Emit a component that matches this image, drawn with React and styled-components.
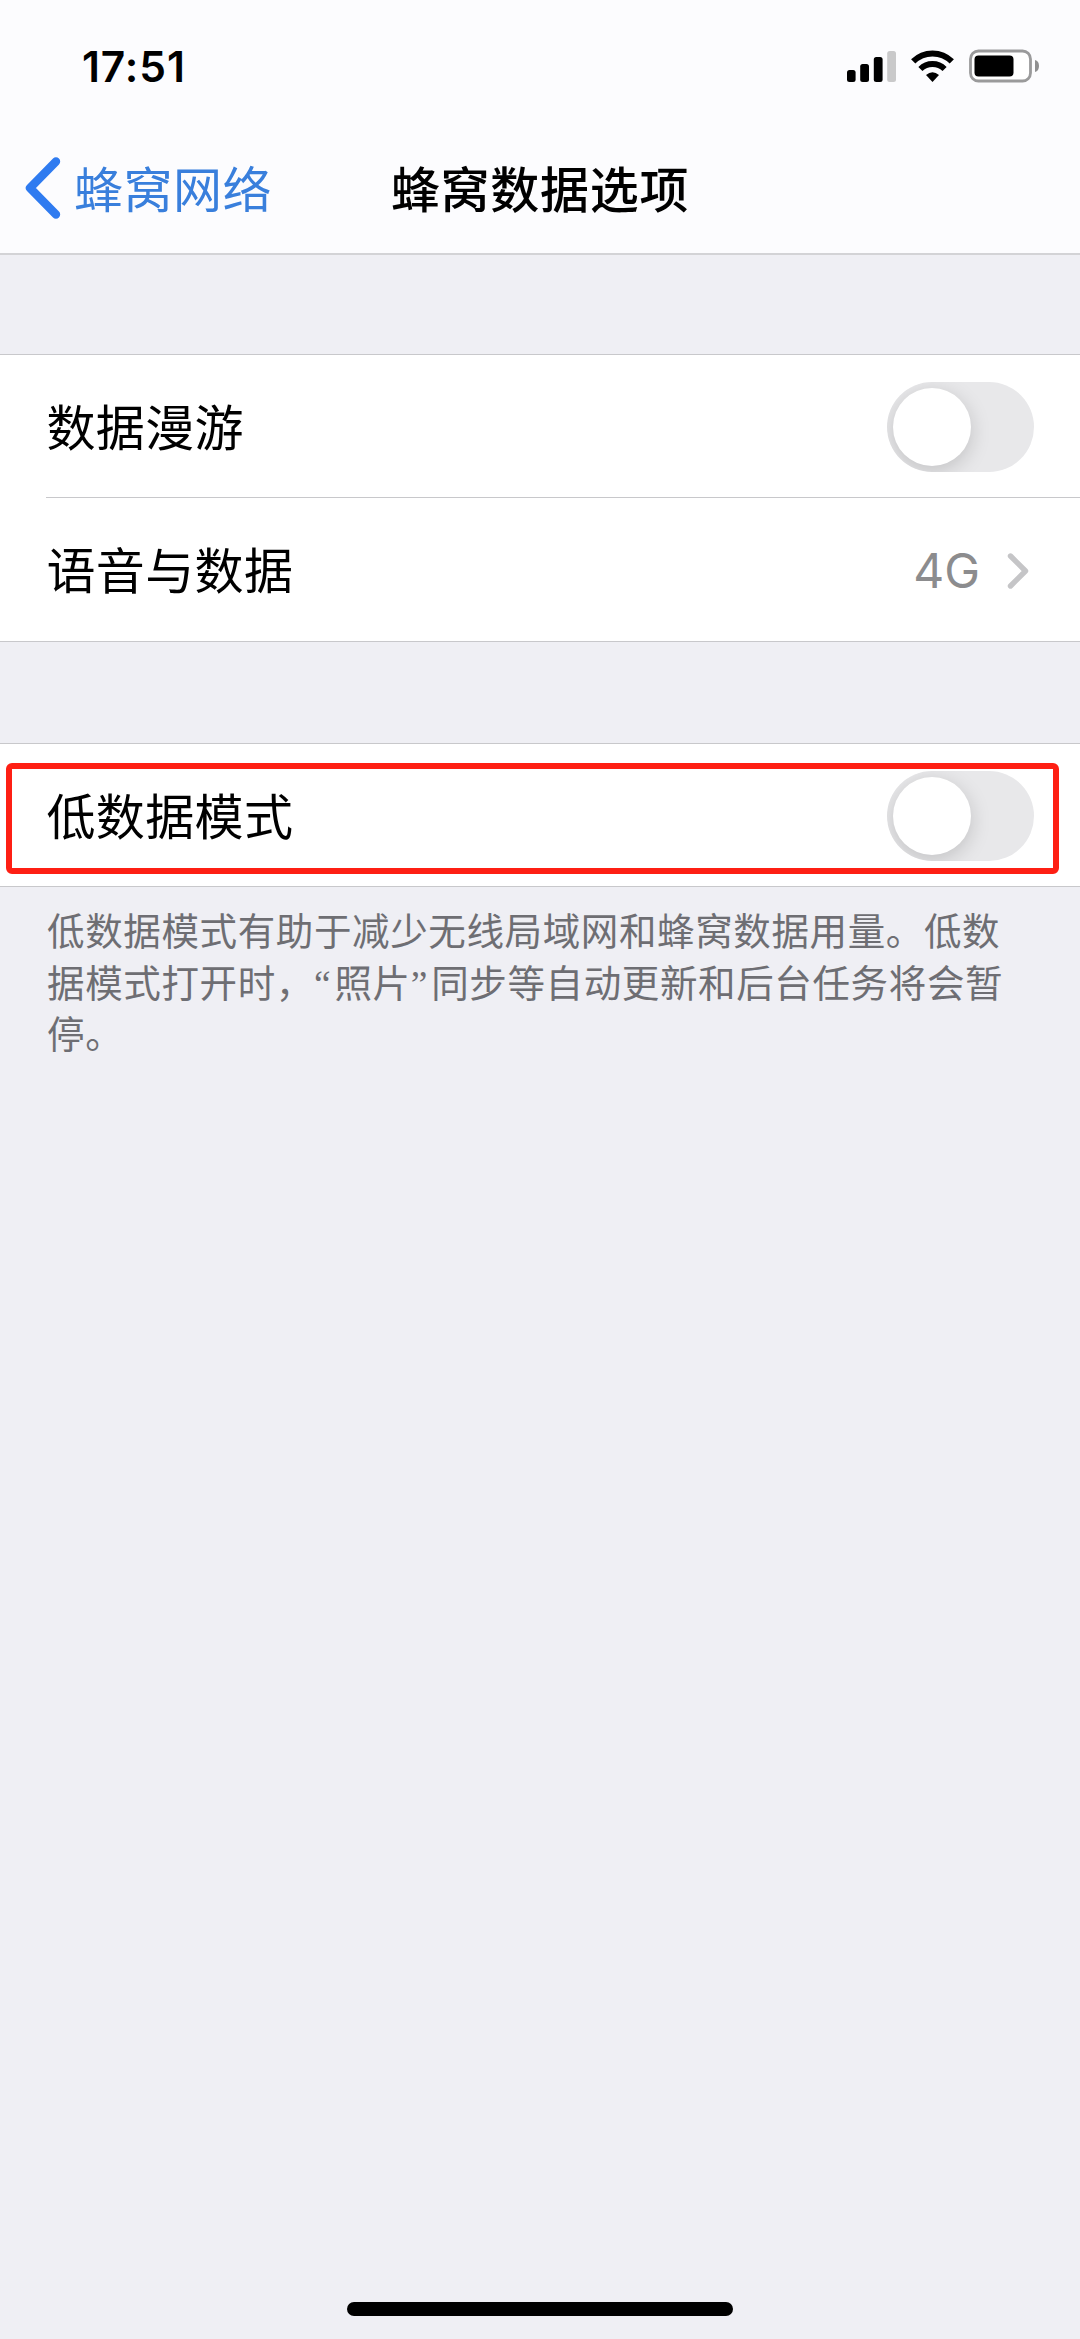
import React from "react";
import styled, { createGlobalStyle } from "styled-components";

const GlobalStyle = createGlobalStyle`
  * { box-sizing: border-box; }
  body { margin: 0; background: #efeff4; }
`;

const Screen = styled.div`
  display: flex;
  flex-direction: column;
  width: 1080px;
  height: 2339px;
  overflow: hidden;
  background: #efeff4;
  color: #000;
  font-family: Inter, "Noto Sans CJK SC", sans-serif;
`;

const Header = styled.header`
  height: 255px;
  background: #fcfcfe;
  border-bottom: 2px solid #d3d3d6;
`;

const StatusBar = styled.div`
  display: flex;
  align-items: center;
  justify-content: space-between;
  height: 133px;
  padding: 0 40px 0 82px;
`;

const Time = styled.time`
  font-size: 42.5px;
  font-weight: 600;
  line-height: 50px;
  letter-spacing: 0.9px;
`;

const StatusIcons = styled.div`
  display: flex;
  align-items: center;
  gap: 14px;
  padding-bottom: 1px;

  svg { display: block; }
`;

const NavBar = styled.nav`
  display: grid;
  grid-template-columns: 1fr auto 1fr;
  align-items: center;
  height: 110px;
  padding: 0 25px;
`;

const BackLink = styled.a`
  display: flex;
  align-items: center;
  gap: 12px;
  color: #397fdc;
  font-family: "Noto Sans CJK SC", sans-serif;
  font-size: 49px;
  line-height: 72px;
  letter-spacing: 0.5px;
  white-space: nowrap;
`;

const BackText = styled.span`
  margin-top: -2px;
`;

const Title = styled.h1`
  margin: -2px 0 0;
  font-family: "Noto Sans CJK SC", sans-serif;
  font-size: 49px;
  font-weight: 500;
  line-height: 72px;
  letter-spacing: 0.7px;
`;

const Group = styled.section`
  margin-top: ${(p) => p.$gap}px;
  background: #fff;
  border-top: 1px solid #c8c8cb;
  border-bottom: 1px solid #c8c8cb;
`;

const Row = styled.div`
  position: relative;
  display: flex;
  margin-left: 46px;
  height: ${(p) => p.$height}px;
  padding-right: 46px;
  align-items: center;
  justify-content: space-between;
  border-top: ${(p) => (p.$divided ? "1px solid #c8c8cb" : "0")};
`;

const Label = styled.span`
  padding: 0 0 3px 0.4px;
  font-family: "Noto Sans CJK SC", sans-serif;
  font-size: 49px;
  line-height: 72px;
  letter-spacing: 0.4px;
`;

const Value = styled.span`
  display: flex;
  align-items: center;
  gap: 27px;
  padding: 2px 5px 0 0;
  color: #8c8c8e;
  font-size: 48px;
  line-height: 60px;
`;

const Track = styled.span`
  display: flex;
  width: 147px;
  height: 90px;
  margin-top: 2px;
  padding: 6px;
  border-radius: 45px;
  background: #e8e8ea;
  overflow: hidden;
`;

const Knob = styled.span`
  width: 78px;
  height: 78px;
  border-radius: 50%;
  background: #fff;
  box-shadow: 0 5px 20px rgba(0, 0, 0, 0.17);
`;

const Highlight = styled.div`
  position: absolute;
  top: 19px;
  left: -40px;
  width: 1053px;
  height: 111px;
  border: 6px solid #fe1f14;
  border-radius: 6px;
`;

const Note = styled.p`
  margin: 0;
  padding: 16.4px 0 0 47px;
  color: #6e6e73;
  font-family: "Noto Sans CJK SC", sans-serif;
  font-size: 37.5px;
  line-height: 51px;
  letter-spacing: 0.63px;
`;

const NoteLine = styled.span`
  display: block;
  height: 51.3px;
  white-space: nowrap;
`;

const Quote = styled.span`
  display: inline-block;
  width: 20.5px;
  line-height: 1;
  text-align: left;
  font-family: "Liberation Serif", serif;
`;

const HomeIndicator = styled.div`
  width: 386px;
  height: 14px;
  margin: auto auto 23px;
  border-radius: 7px;
  background: #000;
`;

const Signal = () => (
  <svg width="50" height="34" viewBox="0 0 50 34">
    <rect x="0" y="21" width="8.6" height="12" rx="2.5" />
    <rect x="13.2" y="15" width="8.8" height="18" rx="2.5" />
    <rect x="26.8" y="8" width="8.8" height="25" rx="2.5" />
    <rect x="40.2" y="2" width="8.8" height="31" rx="2.5" fill="#c9c9ca" />
  </svg>
);

const Wifi = () => (
  <svg width="44" height="34" viewBox="0 0 44 34" fill="none" stroke="#000">
    <path d="M2.2 12.4 A27.3 27.3 0 0 1 40.8 12.4" strokeWidth="6" />
    <path d="M9.4 20 A17.2 17.2 0 0 1 33.6 20" strokeWidth="5.8" />
    <path d="M15 26 Q21.5 20.4 28 26 L21.5 33 Z" fill="#000" stroke="none" />
  </svg>
);

const Battery = () => (
  <svg width="71" height="34" viewBox="0 0 71 34">
    <rect x="1.5" y="2" width="60" height="30" rx="8" fill="#fff" stroke="#9a9a9b" strokeWidth="2.8" />
    <rect x="5.5" y="6.5" width="39" height="21" rx="4" />
    <path d="M66 11 Q70 12 70 17 Q70 22 66 23 Z" fill="#8f8f90" />
  </svg>
);

const BackChevron = () => (
  <svg width="37" height="64" viewBox="0 0 37 64" fill="none" stroke="#2f7bf0" strokeWidth="8.4" strokeLinecap="round" strokeLinejoin="round">
    <path d="M31 5.5 L5 32 L31 58.5" />
  </svg>
);

const Disclosure = () => (
  <svg width="22" height="38" viewBox="0 0 22 38" fill="none" stroke="#c5c5c7" strokeWidth="5.4" strokeLinecap="round" strokeLinejoin="round">
    <path d="M3.5 4 L18.5 19 L3.5 34" />
  </svg>
);

const Switch = () => (
  <Track role="switch" aria-checked="false">
    <Knob />
  </Track>
);

export default function App() {
  return (
    <Screen lang="zh-CN">
      <GlobalStyle />
      <Header>
        <StatusBar>
          <Time>17:51</Time>
          <StatusIcons>
            <Signal />
            <Wifi />
            <Battery />
          </StatusIcons>
        </StatusBar>
        <NavBar>
          <BackLink>
            <BackChevron />
            <BackText>蜂窝网络</BackText>
          </BackLink>
          <Title>蜂窝数据选项</Title>
        </NavBar>
      </Header>
      <main>
        <Group $gap={99}>
          <Row $height={142}>
            <Label>数据漫游</Label>
            <Switch />
          </Row>
          <Row $height={144} $divided>
            <Label>语音与数据</Label>
            <Value>
              4G
              <Disclosure />
            </Value>
          </Row>
        </Group>
        <Group $gap={101}>
          <Row $height={142}>
            <Label>低数据模式</Label>
            <Switch />
            <Highlight />
          </Row>
        </Group>
        <Note>
          <NoteLine>低数据模式有助于减少无线局域网和蜂窝数据用量。低数</NoteLine>
          <NoteLine>
            据模式打开时，<Quote>“</Quote>照片<Quote>”</Quote>同步等自动更新和后台任务将会暂
          </NoteLine>
          <NoteLine>停。</NoteLine>
        </Note>
      </main>
      <HomeIndicator />
    </Screen>
  );
}
